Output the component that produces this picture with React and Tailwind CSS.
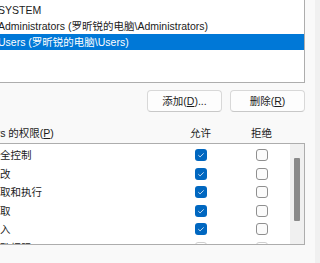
const users = [
  { name: 'Authenticated Users' },
  { name: 'SYSTEM' },
  { name: 'Administrators (罗昕锐的电脑\\Administrators)' },
  { name: 'Users (罗昕锐的电脑\\Users)', selected: true },
]

const perms = [
  { label: '完全控制', allow: true },
  { label: '修改', allow: true },
  { label: '读取和执行', allow: true },
  { label: '读取', allow: true },
  { label: '写入', allow: true },
  { label: '特殊权限', allow: false, dim: true },
]

function Check({ on, dim }) {
  if (on) {
    return (
      <span className="w-[12px] h-[12px] rounded-[3px] bg-[#0067c0] flex items-center justify-center">
        <svg width="12" height="12" viewBox="0 0 12 12">
          <path d="M3.3 6.2 L5.1 7.9 L8.7 4.4" fill="none" stroke="#d9e8f7" strokeWidth="0.9" />
        </svg>
      </span>
    )
  }
  return (
    <span
      className={
        dim
          ? 'w-[12px] h-[12px] rounded-[3px] bg-white border border-[#cfcfcf]'
          : 'w-[12px] h-[12px] rounded-[3px] bg-[#fbfbfb] border border-[#8f8f8f]'
      }
    />
  )
}

export default function App() {
  return (
    <div className="w-[320px] h-[263px] overflow-hidden bg-[#f9f9f9] flex text-[10.5px] leading-[16px] text-[#1b1b1b] font-['Liberation_Sans','Noto_Sans_CJK_SC',sans-serif]">
      <div className="w-[315px] shrink-0 overflow-hidden">
        <div className="ml-[-30px] w-[335px]">
          {/* group / user names */}
          <div className="mt-[-15px] h-[98px] bg-white border border-[#adadad] overflow-hidden">
            {users.map((u) => (
              <div
                key={u.name}
                className={
                  u.selected
                    ? 'h-[16px] pl-[27px] whitespace-nowrap bg-[#0078d7] text-white'
                    : 'h-[16px] pl-[27px] whitespace-nowrap'
                }
              >
                {u.name}
              </div>
            ))}
          </div>

          <div className="mt-[7px] flex justify-end gap-[8px]">
            <button className="w-[75px] h-[22px] rounded-[4px] bg-[#fdfdfd] border border-[#d8d8d8] border-b-[#c8c8c8] flex items-center justify-center">
              添加(<span className="underline">D</span>)...
            </button>
            <button className="w-[75px] h-[22px] rounded-[4px] bg-[#fdfdfd] border border-[#d8d8d8] border-b-[#c8c8c8] flex items-center justify-center">
              删除(<span className="underline">R</span>)
            </button>
          </div>

          {/* permissions header */}
          <div className="mt-[13px] h-[16px] grid grid-cols-[210px_41px_20px_41px_1fr] whitespace-nowrap">
            <div className="pl-[8px]">
              Users 的权限(<span className="underline">P</span>)
            </div>
            <div className="text-center">允许</div>
            <div />
            <div className="text-center">拒绝</div>
          </div>

          <div className="mt-[2px] h-[102px] bg-white border border-[#adadad] flex overflow-hidden">
            <div className="flex-1 pt-[2px]">
              {perms.map((p) => (
                <div
                  key={p.label}
                  className="h-[18.5px] grid grid-cols-[209px_41px_20px_41px_1fr] items-center whitespace-nowrap"
                >
                  <div className="pl-[18.5px]">{p.label}</div>
                  <div className="flex justify-center">
                    <Check on={p.allow} dim={p.dim} />
                  </div>
                  <div />
                  <div className="flex justify-center">
                    <Check dim={p.dim} />
                  </div>
                </div>
              ))}
            </div>
            <div className="w-[14px] shrink-0 bg-[#f0f0f0] pt-[14px] flex justify-center">
              <div className="w-[6px] h-[63px] bg-[#8a8a8a] rounded-[1px]" />
            </div>
          </div>
        </div>
      </div>
      <div className="w-[5px] shrink-0 bg-[#f0f0f0]" />
    </div>
  )
}
